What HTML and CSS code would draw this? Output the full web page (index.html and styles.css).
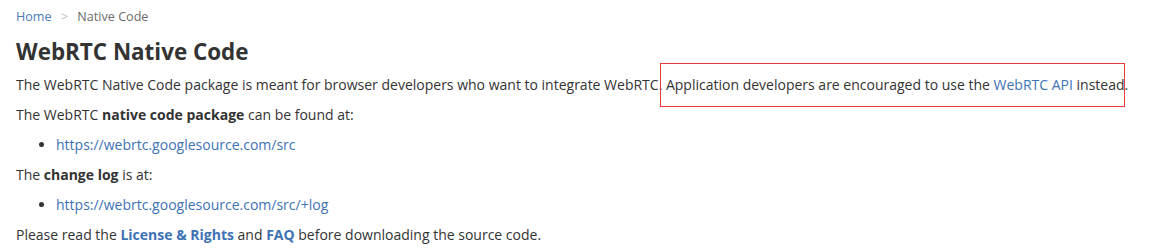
FILE: index.html
```html
<!DOCTYPE html>
<html lang="en">
<head>
    <meta charset="UTF-8">
    <title>WebRTC Native Code</title>
    <link rel="stylesheet" href="styles.css">
</head>
<body>
    <div class="page">
        <nav class="crumbs">
            <a href="#">Home</a>
            <span class="sep">&gt;</span>
            <span class="current">Native Code</span>
        </nav>
        <h1>WebRTC Native Code</h1>
        <p class="intro">The WebRTC Native Code package is meant for browser developers who want to integrate WebRTC. Application developers are encouraged to use the <a href="#">WebRTC API</a> instead.<span class="mark"></span></p>
        <p>The WebRTC <b>native code package</b> can be found at:</p>
        <ul>
            <li><a href="#">https://webrtc.googlesource.com/src</a></li>
        </ul>
        <p>The <b>change log</b> is at:</p>
        <ul>
            <li><a href="#">https://webrtc.googlesource.com/src/+log</a></li>
        </ul>
        <p>Please read the <a href="#" class="strong">License &amp; Rights</a> and <a href="#" class="strong">FAQ</a> before downloading the source code.</p>
    </div>
</body>
</html>
```

FILE: styles.css
```css
body {
    margin: 0;
    font-family: 'Open Sans', 'Noto Sans', sans-serif;
    font-size: 14px;
    color: #333;
    background: #fff;
}
.page {
    padding: 0 16px;
}
a {
    color: #3d72b5;
    text-decoration: none;
}
a.strong {
    font-weight: bold;
}
.crumbs {
    padding-top: 7px;
    font-size: 12.6px;
    line-height: 20px;
}
.crumbs a {
    color: #4b7ab3;
}
.crumbs .sep {
    color: #bbb;
    margin: 0 6px;
}
.crumbs .current {
    color: #6b6b6b;
}
h1 {
    font-size: 22.4px;
    line-height: 30px;
    margin: 10px 0 0;
    color: #333;
}
p {
    margin: 10px 0;
    line-height: 20px;
}
p.intro {
    position: relative;
    margin-top: 8px;
}
/* red highlight box drawn over the second sentence */
.mark {
    position: absolute;
    left: 644px;
    top: -12px;
    width: 463px;
    height: 42px;
    border: 1px solid #e63c3f;
}
ul {
    margin: 10px 0;
    padding-left: 40px;
    line-height: 20px;
}
```
